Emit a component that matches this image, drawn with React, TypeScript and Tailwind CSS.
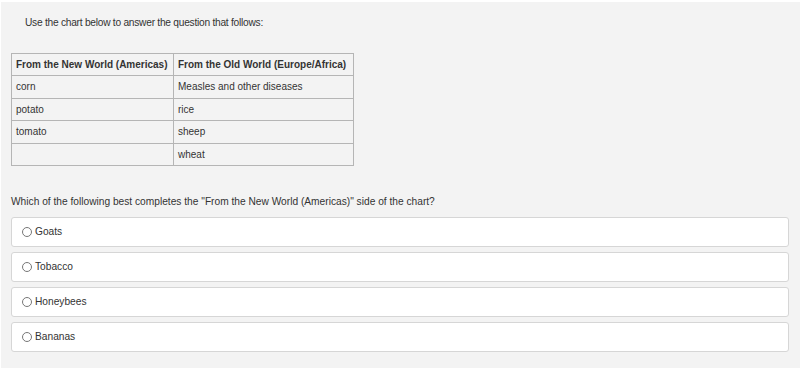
import { useState } from "react";

const rows: [string, string][] = [
  ["corn", "Measles and other diseases"],
  ["potato", "rice"],
  ["tomato", "sheep"],
  ["", "wheat"],
];

const choices = ["Goats", "Tobacco", "Honeybees", "Bananas"];

export default function App() {
  const [picked, setPicked] = useState<string | null>(null);

  return (
    <div className="h-[372px] w-[800px] bg-white pt-[2px] pl-[1px] font-['Liberation_Sans',Arial,sans-serif] text-[10.2px] text-[#333]">
      <div className="h-[366px] bg-[#f3f3f3] px-[10px] pt-[14px]">
        <p className="pl-[14px] leading-[13px] tracking-[-0.25px]">
          Use the chart below to answer the question that follows:
        </p>

        <table className="mt-[24px] w-[342px] table-fixed border-collapse whitespace-nowrap text-left text-[10px]">
          <colgroup>
            <col className="w-[162px]" />
            <col className="w-[180px]" />
          </colgroup>
          <thead>
            <tr className="h-[22px]">
              <th className="border border-[#b5b5b5] px-[4px] font-bold">
                From the New World (Americas)
              </th>
              <th className="border border-[#b5b5b5] px-[4px] font-bold">
                From the Old World (Europe/Africa)
              </th>
            </tr>
          </thead>
          <tbody>
            {rows.map(([newWorld, oldWorld], i) => (
              <tr key={i} className="h-[22.5px]">
                <td className="border border-[#b5b5b5] px-[4px]">{newWorld}</td>
                <td className="border border-[#b5b5b5] px-[4px]">{oldWorld}</td>
              </tr>
            ))}
          </tbody>
        </table>

        <p className="mt-[29px] leading-[13px]">
          Which of the following best completes the "From the New World (Americas)" side of the chart?
        </p>

        <div className="mt-[9px] mr-[1px] flex flex-col gap-[5px]">
          {choices.map((choice) => (
            <label
              key={choice}
              className="flex h-[30px] cursor-pointer items-center gap-[3px] rounded-[3px] border border-[#d6d6d6] bg-white pl-[10px]"
            >
              <input
                type="radio"
                name="answer"
                checked={picked === choice}
                onChange={() => setPicked(choice)}
                className="mb-[1px] h-[10px] w-[10px] appearance-none rounded-full border border-[#777] checked:bg-[#555]"
              />
              <span>{choice}</span>
            </label>
          ))}
        </div>
      </div>
    </div>
  );
}
